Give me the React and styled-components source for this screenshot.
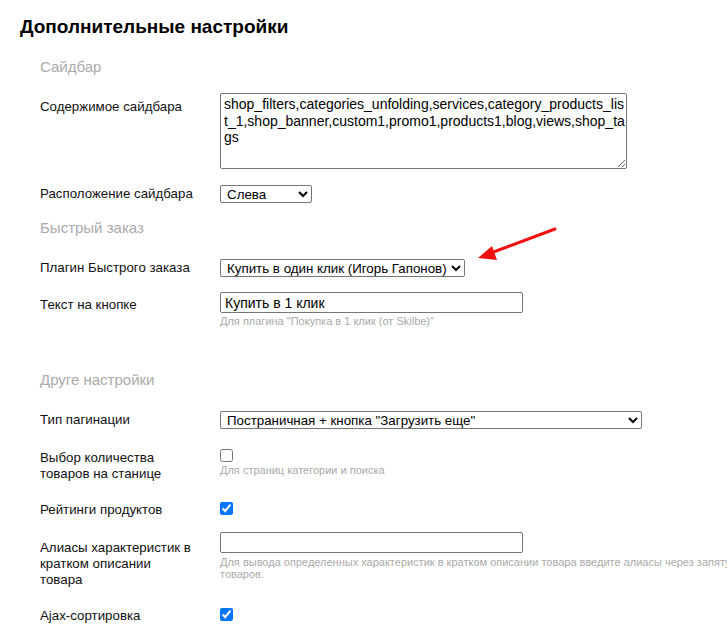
import React from "react";
import styled, { createGlobalStyle } from "styled-components";

const Global = createGlobalStyle`
  html, body { margin: 0; padding: 0; background: #fff; overflow: hidden; }
  body { font-family: "Liberation Sans", Arial, sans-serif; color: #222; }
`;

const Page = styled.div`
  position: relative;
  width: 727px;
  height: 640px;
  overflow: hidden;
  padding: 16px 0 0 20px;
  box-sizing: border-box;
`;

const Title = styled.h1`
  margin: 0;
  font-size: 19px;
  line-height: 22px;
  font-weight: bold;
  color: #000;
`;

const Section = styled.div`
  padding-left: 20px;
`;

const Heading = styled.h2`
  margin: ${(p) => p.$top}px 0 15px;
  font-size: 15px;
  line-height: 18px;
  font-weight: normal;
  color: #aaa;
`;

const Row = styled.div`
  display: grid;
  grid-template-columns: 180px 1fr;
  margin-bottom: ${(p) => p.$gap ?? 12}px;
`;

const Label = styled.div`
  padding-top: 8px;
  padding-right: 26px;
  font-size: 13.3px;
  line-height: 16px;
  color: #111;
`;

const Field = styled.div`
  padding-top: ${(p) => p.$offset ?? 0}px;
  display: flex;
  flex-direction: column;
  align-items: flex-start;
  min-width: 0;
`;

const TextArea = styled.textarea`
  width: 407px;
  height: 76px;
  box-sizing: border-box;
  font-family: "Liberation Sans", Arial, sans-serif;
  font-size: 14px;
  line-height: 16.5px;
  padding: 2px 1px 2px 3px;
  border: 1px solid #767676;
  border-radius: 2px;
  color: #000;
  resize: both;
  overflow: hidden;
  margin: 0;
`;

const Select = styled.select`
  width: ${(p) => p.$w}px;
  height: 18px;
  box-sizing: border-box;
  font-family: "Liberation Sans", Arial, sans-serif;
  font-size: 13.33px;
  border: 1px solid #767676;
  border-radius: 2px;
  background: #fff;
  color: #000;
  padding: 0 0 0 2px;
  margin: 0;
`;

const Input = styled.input`
  width: 303px;
  height: 21px;
  box-sizing: border-box;
  font-family: "Liberation Sans", Arial, sans-serif;
  font-size: 14px;
  border: 1px solid #767676;
  border-radius: 2px;
  padding: 1px 4px;
  color: #000;
  margin: 0;
`;

const Check = styled.input.attrs({ type: "checkbox" })`
  width: 13px;
  height: 13px;
  margin: 0;
  accent-color: #0075ff;
`;

const Hint = styled.div`
  margin-top: ${(p) => p.$top ?? 2}px;
  font-size: 11px;
  line-height: 12px;
  color: #aaa;
  width: ${(p) => (p.$wide ? "700px" : "auto")};
  white-space: ${(p) => (p.$wide ? "normal" : "nowrap")};
`;

const Arrow = styled.svg`
  position: absolute;
  left: 470px;
  top: 222px;
  width: 95px;
  height: 45px;
  pointer-events: none;
`;

export default function App() {
  return (
    <>
      <Global />
      <Page>
        <Title>Дополнительные настройки</Title>
        <Section>
          <Heading $top={20}>Сайдбар</Heading>
          <Row $gap={9}>
            <Label>Содержимое сайдбара</Label>
            <Field $offset={2}>
              <TextArea
                readOnly
                defaultValue="shop_filters,categories_unfolding,services,category_products_list_1,shop_banner,custom1,promo1,products1,blog,views,shop_tags"
              />
            </Field>
          </Row>
          <Row $gap={0}>
            <Label>Расположение сайдбара</Label>
            <Field $offset={7}>
              <Select $w={92} defaultValue="left">
                <option value="left">Слева</option>
                <option value="right">Справа</option>
              </Select>
            </Field>
          </Row>

          <Heading $top={16}>Быстрый заказ</Heading>
          <Row $gap={12}>
            <Label>Плагин Быстрого заказа</Label>
            <Field $offset={7}>
              <Select $w={245} defaultValue="a">
                <option value="a">Купить в один клик (Игорь Гапонов)</option>
              </Select>
            </Field>
          </Row>
          <Row $gap={0}>
            <Label>Текст на кнопке</Label>
            <Field $offset={3}>
              <Input readOnly defaultValue="Купить в 1 клик" />
              <Hint $top={2}>Для плагина "Покупка в 1 клик (от Skilbe)"</Hint>
            </Field>
          </Row>

          <Heading $top={44}>Друге настройки</Heading>
          <Row $gap={13}>
            <Label>Тип пагинации</Label>
            <Field $offset={7}>
              <Select $w={422} defaultValue="a">
                <option value="a">Постраничная + кнопка "Загрузить еще"</option>
              </Select>
            </Field>
          </Row>
          <Row $gap={12}>
            <Label>Выбор количества товаров на станице</Label>
            <Field $offset={7}>
              <Check readOnly />
              <Hint $top={2}>Для страниц категории и поиска</Hint>
            </Field>
          </Row>
          <Row $gap={14}>
            <Label>Рейтинги продуктов</Label>
            <Field $offset={8}>
              <Check readOnly defaultChecked />
            </Field>
          </Row>
          <Row $gap={12}>
            <Label>Алиасы характеристик в кратком описании товара</Label>
            <Field $offset={0}>
              <Input readOnly defaultValue="" />
              <Hint $top={3} $wide>
                Для вывода определенных характеристик в кратком описании товара введите алиасы через запятую, они будут
                выведены в списке товаров.
              </Hint>
            </Field>
          </Row>
          <Row $gap={12}>
            <Label>Ajax-сортировка</Label>
            <Field $offset={8}>
              <Check readOnly defaultChecked />
            </Field>
          </Row>
        </Section>
        <Arrow viewBox="0 0 95 45">
          <line x1="85" y1="7" x2="18" y2="32" stroke="#f01010" strokeWidth="3" strokeLinecap="round" />
          <polygon points="8,36 22,24 27,38" fill="#f01010" />
        </Arrow>
      </Page>
    </>
  );
}
